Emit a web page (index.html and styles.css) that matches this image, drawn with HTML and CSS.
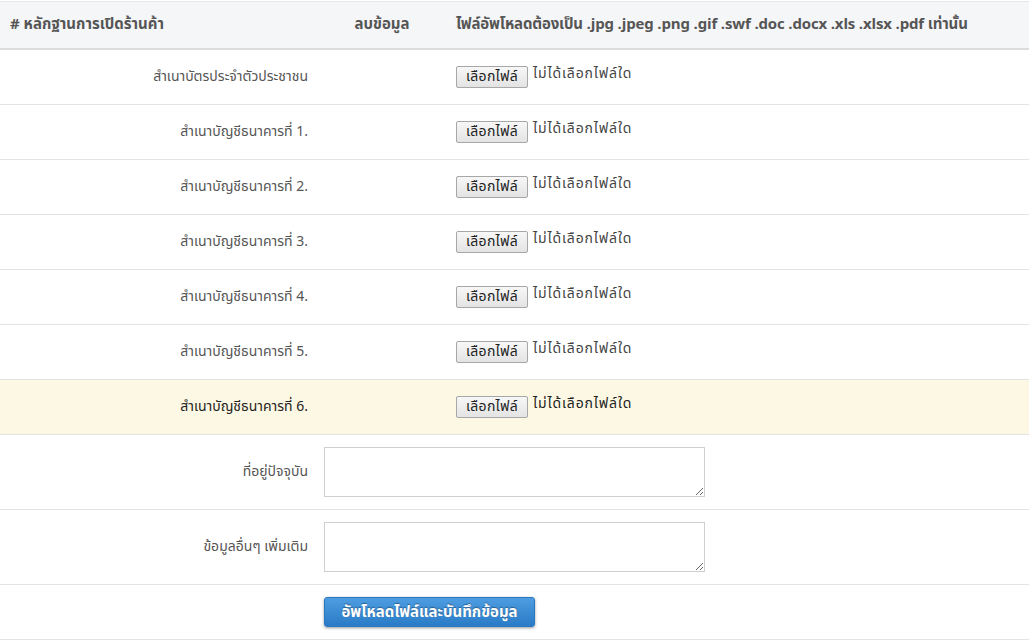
FILE: index.html
```html
<!DOCTYPE html>
<html lang="th">
<head>
<meta charset="utf-8">
<link rel="stylesheet" href="styles.css">
</head>
<body>
<div class="wrap">
<table class="docs">
  <colgroup>
    <col class="c1"><col class="c2"><col class="c3">
  </colgroup>
  <thead>
    <tr>
      <th class="h-left h-first"># หลักฐานการเปิดร้านค้า</th>
      <th class="h-center">ลบข้อมูล</th>
      <th class="h-left h-files">ไฟล์อัพโหลดต้องเป็น .jpg .jpeg .png .gif .swf .doc .docx .xls .xlsx .pdf เท่านั้น</th>
    </tr>
  </thead>
  <tbody>
    <tr>
      <td class="label">สำเนาบัตรประจำตัวประชาชน</td>
      <td></td>
      <td><span class="file"><span class="file-btn">เลือกไฟล์</span><span class="file-name">ไม่ได้เลือกไฟล์ใด</span></span></td>
    </tr>
    <tr>
      <td class="label">สำเนาบัญชีธนาคารที่ 1.</td>
      <td></td>
      <td><span class="file"><span class="file-btn">เลือกไฟล์</span><span class="file-name">ไม่ได้เลือกไฟล์ใด</span></span></td>
    </tr>
    <tr>
      <td class="label">สำเนาบัญชีธนาคารที่ 2.</td>
      <td></td>
      <td><span class="file"><span class="file-btn">เลือกไฟล์</span><span class="file-name">ไม่ได้เลือกไฟล์ใด</span></span></td>
    </tr>
    <tr>
      <td class="label">สำเนาบัญชีธนาคารที่ 3.</td>
      <td></td>
      <td><span class="file"><span class="file-btn">เลือกไฟล์</span><span class="file-name">ไม่ได้เลือกไฟล์ใด</span></span></td>
    </tr>
    <tr>
      <td class="label">สำเนาบัญชีธนาคารที่ 4.</td>
      <td></td>
      <td><span class="file"><span class="file-btn">เลือกไฟล์</span><span class="file-name">ไม่ได้เลือกไฟล์ใด</span></span></td>
    </tr>
    <tr>
      <td class="label">สำเนาบัญชีธนาคารที่ 5.</td>
      <td></td>
      <td><span class="file"><span class="file-btn">เลือกไฟล์</span><span class="file-name">ไม่ได้เลือกไฟล์ใด</span></span></td>
    </tr>
    <tr class="hl">
      <td class="label">สำเนาบัญชีธนาคารที่ 6.</td>
      <td></td>
      <td><span class="file"><span class="file-btn">เลือกไฟล์</span><span class="file-name">ไม่ได้เลือกไฟล์ใด</span></span></td>
    </tr>
    <tr class="ta-row">
      <td class="label">ที่อยู่ปัจจุบัน</td>
      <td colspan="2"><textarea class="ta"></textarea></td>
    </tr>
    <tr class="ta-row">
      <td class="label">ข้อมูลอื่นๆ เพิ่มเติม</td>
      <td colspan="2"><textarea class="ta"></textarea></td>
    </tr>
    <tr class="btn-row">
      <td></td>
      <td colspan="2"><button class="submit" type="button">อัพโหลดไฟล์และบันทึกข้อมูล</button></td>
    </tr>
  </tbody>
</table>
</div>
</body>
</html>
```
FILE: styles.css
```css
html, body {
  margin: 0;
  padding: 0;
  background: #fff;
}
body {
  font-family: Tahoma, "Noto Sans Thai", "Noto Sans", "DejaVu Sans", sans-serif;
  font-size: 14px;
  color: #555;
}
.wrap {
  padding: 1px 1px 0 0;
}
.docs {
  width: 1029px;
  border-collapse: collapse;
  border-top: 1px solid #e8e8e8;
}
.c1 { width: 316px; }
.c2 { width: 132px; }
.docs th {
  background: #f5f6f8;
  font-weight: bold;
  font-size: 15px;
  color: #555;
  padding: 12px 8px 12px 8px;
  line-height: 22px;
  border-bottom: 2px solid #dcdcdc;
  white-space: nowrap;
}
.docs th.h-first { padding-left: 10px; }
.docs th.h-files { letter-spacing: -0.15px; }
.h-left { text-align: left; }
.h-center { text-align: center; }
.docs td {
  padding: 16px 8px;
  line-height: 22px;
  border-bottom: 1px solid #e3e3e3;
  vertical-align: middle;
}
.docs td.label {
  text-align: right;
  color: #555;
}
.file {
  display: inline-flex;
  align-items: flex-start;
  gap: 5px;
  height: 22px;
}
.file-btn {
  display: inline-block;
  box-sizing: border-box;
  width: 72px;
  height: 22px;
  padding: 0;
  text-align: center;
  line-height: 20px;
  font-size: 14px;
  letter-spacing: 0.3px;
  color: #222;
  border: 1px solid #a7a7a7;
  border-radius: 2px;
  background: linear-gradient(#f7f7f7, #e3e3e3);
}
.file-name {
  line-height: 16px;
  letter-spacing: 0.85px;
  color: #444;
}
.hl td { background: #fcf8e3; }
.hl td.label, .hl .file-name { color: #222; }
.ta-row td { padding: 12px 8px; }
.ta {
  display: block;
  box-sizing: border-box;
  width: 381px;
  height: 50px;
  margin: 0;
  border: 1px solid #cfcfcf;
  resize: both;
  font: inherit;
}
.btn-row td { padding: 12px 8px; }
.submit {
  display: block;
  box-sizing: border-box;
  width: 211px;
  height: 30px;
  padding: 0;
  font-family: inherit;
  font-size: 15px;
  font-weight: bold;
  color: #fff;
  text-shadow: 0 -1px 1px rgba(0,0,0,0.35);
  border: 1px solid #2c78c0;
  border-radius: 3px;
  background: linear-gradient(#4e9de2, #2a7bc6);
  box-shadow: 0 1px 3px rgba(0,0,0,0.4);
}
```
